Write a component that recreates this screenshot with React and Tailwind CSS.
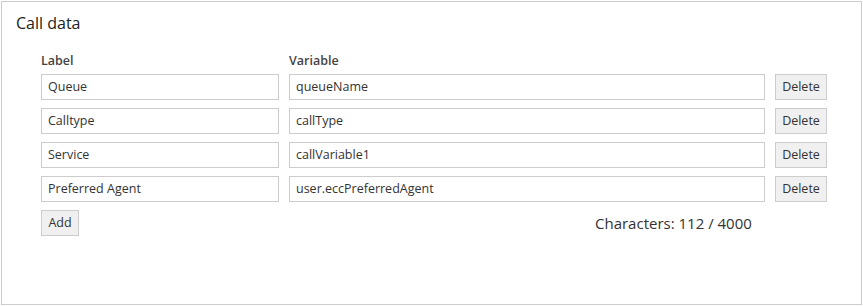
import React from "react";

const rows = [
  ["Queue", "queueName"],
  ["Calltype", "callType"],
  ["Service", "callVariable1"],
  ["Preferred Agent", "user.eccPreferredAgent"],
];

export default function App() {
  return (
    <div className="w-[863px] h-[306px] bg-white p-px" style={{ fontFamily: '"Open Sans", "Noto Sans", sans-serif' }}>
      <div className="w-[861px] h-[304px] border border-[#cccccc] text-[#333333]">
        <div className="pl-[14px] pt-[10px] text-[16px] leading-[22px] text-[#222]">Call data</div>
        <div className="pl-[39px] pt-[18px]">
          <div className="flex gap-[10px] text-[12.5px] font-semibold leading-[18px] text-[#444]">
            <div className="w-[238px]">Label</div>
            <div className="w-[476px]">Variable</div>
          </div>
          <div className="mt-[4px] flex flex-col gap-[8px]">
            {rows.map(([l, v]) => (
              <div key={l} className="flex gap-[10px] h-[26px]">
                <div className="w-[238px] h-[26px] border border-[#cccccc] px-[6px] flex items-center text-[12.5px]">{l}</div>
                <div className="w-[476px] h-[26px] border border-[#cccccc] px-[6px] flex items-center text-[12.5px]">{v}</div>
                <button className="w-[52px] h-[26px] border border-[#cccccc] bg-[#f0f0f0] text-[12.5px] text-[#333] flex items-center justify-center">Delete</button>
              </div>
            ))}
          </div>
          <div className="mt-[8px] flex items-start">
            <button className="w-[38px] h-[26px] border border-[#cccccc] bg-[#f0f0f0] text-[12.5px] text-[#333] flex items-center justify-center">Add</button>
            <div className="ml-[516px] mt-[3px] text-[15px] leading-[20px] text-[#333]">Characters: 112 / 4000</div>
          </div>
        </div>
      </div>
    </div>
  );
}
